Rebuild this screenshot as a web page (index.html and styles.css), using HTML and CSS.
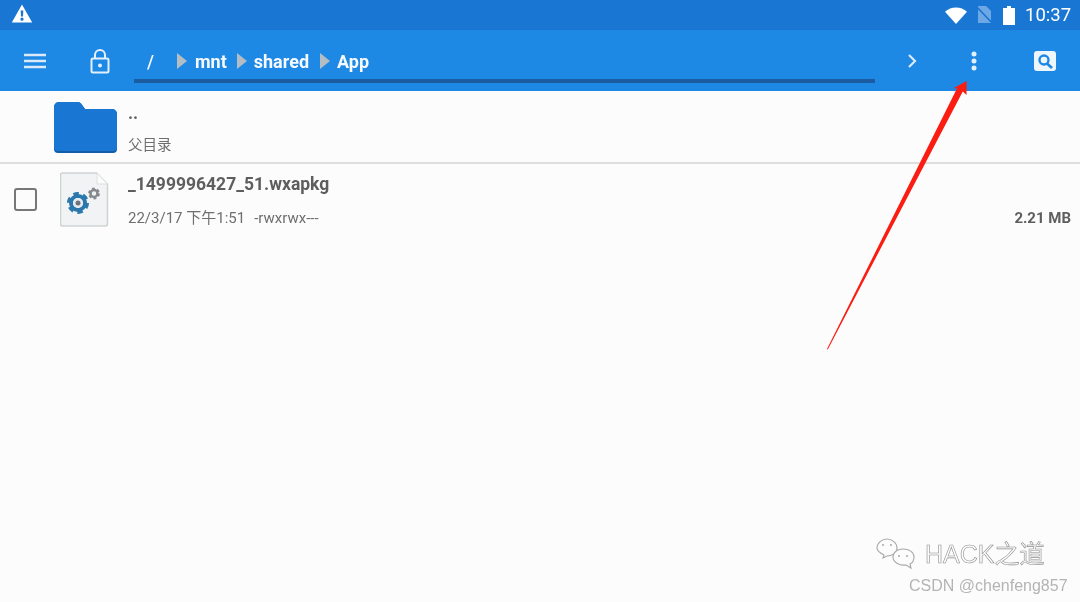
FILE: index.html
```html
<!DOCTYPE html>
<html lang="zh">
<head>
<meta charset="utf-8">
<title>File manager</title>
<link rel="stylesheet" href="styles.css">
</head>
<body>
<div class="screen">
  <header class="status-bar">
    <svg class="warn-icon" width="22" height="20" viewBox="0 0 22 20"><path fill="#fff" fill-rule="evenodd" d="M11 .5 21.2 18.500H.8ZM9.700 6.500l.3 6h2l.3-6ZM11 13.600a1.600 1.600 0 1 0 0 3.200 1.600 1.600 0 0 0 0-3.200Z"/></svg>
    <div class="status-right">
      <svg class="wifi-icon" width="22" height="17" viewBox="0 0 22 17"><path fill="#fff" d="M0 4.800C3 2 6.800.5 11 .5s8 1.500 11 4.300L11 17Z"/></svg>
      <svg class="sim-icon" width="17" height="20" viewBox="0 0 17 20"><path fill="#6ea8e4" d="M2 1h8l5 5v12H2Z"/><path stroke="#1976d2" stroke-width="1.600" d="M0 1 17 19"/></svg>
      <svg class="battery-icon" width="12" height="19" viewBox="0 0 12 19"><path fill="#fff" d="M4 0h4v2h4v17H0V2h4Z"/></svg>
      <span class="clock">10:37</span>
    </div>
  </header>

  <nav class="toolbar">
    <div class="tool tool-menu">
      <svg width="24" height="16" viewBox="0 0 24 16"><path stroke="#dbeafa" stroke-width="2.400" d="M1 2h22M1 8h22M1 14h22"/></svg>
    </div>
    <div class="tool tool-lock">
      <svg width="20" height="25" viewBox="0 0 20 25"><g fill="none" stroke="#e3f0fc" stroke-width="2"><rect x="1.500" y="9.500" width="17" height="14" rx="1.500"/><path d="M5 9.500V6a5 5 0 0 1 10 0v3.500"/></g><circle cx="10" cy="16.500" r="2" fill="#e3f0fc"/></svg>
    </div>
    <div class="path-bar">
      <span class="crumb crumb-root">/</span>
      <span class="sep sep-root"></span>
      <span class="crumb">mnt</span>
      <span class="sep"></span>
      <span class="crumb">shared</span>
      <span class="sep sep-last"></span>
      <span class="crumb">App</span>
    </div>
    <div class="tool tool-next">
      <svg width="10" height="14" viewBox="0 0 10 14"><path fill="none" stroke="#dbeafa" stroke-width="2.200" d="M2 1l6 6-6 6"/></svg>
    </div>
    <div class="tool tool-more">
      <svg width="6" height="20" viewBox="0 0 6 20"><g fill="#e3f0fc"><circle cx="3" cy="3" r="2.500"/><circle cx="3" cy="10" r="2.500"/><circle cx="3" cy="17" r="2.500"/></g></svg>
    </div>
    <div class="tool tool-search">
      <svg width="22" height="20" viewBox="0 0 22 20"><rect width="22" height="20" rx="3" fill="#eef6fd"/><circle cx="10" cy="9" r="4.500" fill="none" stroke="#1e88e5" stroke-width="2.400"/><path stroke="#1e88e5" stroke-width="2.800" d="M13 12.500l5 4.500"/></svg>
    </div>
  </nav>

  <main class="list">
    <section class="row row-parent">
      <div class="row-icon">
        <svg width="63" height="52" viewBox="0 0 63 52"><path fill="#135ea8" d="M0 6a5 5 0 0 1 5-5h19a4 4 0 0 1 3 1.500L31 8h27a5 5 0 0 1 5 5v35a4 4 0 0 1-4 4H4a4 4 0 0 1-4-4Z"/><path fill="#1976d2" d="M0 6a5 5 0 0 1 5-5h19a4 4 0 0 1 3 1.500L31 8h27a5 5 0 0 1 5 5v33a4 4 0 0 1-4 4H4a4 4 0 0 1-4-4Z"/></svg>
      </div>
      <div class="row-text">
        <div class="name">..</div>
        <div class="meta meta-parent">父目录</div>
      </div>
    </section>
    <section class="row row-file">
      <div class="check"></div>
      <div class="row-icon">
        <svg width="50" height="55" viewBox="0 0 50 55">
          <path fill="#f1f3f5" stroke="#cfd2d4" stroke-width="1.500" d="M2.500 1h34l11 11v40a2 2 0 0 1-2 2H2.500a2 2 0 0 1-2-2V3a2 2 0 0 1 2-2Z"/>
          <path fill="#fbfbfb" stroke="#dcdfe1" d="M37 1v11h10.500Z"/>
          <g fill="none">
            <circle cx="18" cy="31" r="7" stroke="#2b78ad" stroke-width="4"/>
            <circle cx="18" cy="31" r="9.500" stroke="#2b78ad" stroke-width="3" stroke-dasharray="5.500 4.450"/>
            <circle cx="34" cy="21.500" r="3.500" stroke="#85898c" stroke-width="2.500"/>
            <circle cx="34" cy="21.500" r="5" stroke="#85898c" stroke-width="1.800" stroke-dasharray="2.800 2.440"/>
          </g>
          <circle cx="18" cy="31" r="5" fill="#e6edf2"/>
          <circle cx="18" cy="31" r="2.500" fill="#6d7377"/>
        </svg>
      </div>
      <div class="row-text">
        <div class="name">_1499996427_51.wxapkg</div>
        <div class="meta"><span>22/3/17 下午1:51</span><span class="perm">-rwxrwx---</span></div>
      </div>
      <div class="size">2.21 MB</div>
    </section>
  </main>

  <svg class="arrow" width="150" height="280" viewBox="820 75 150 280"><path fill="#fb1d12" d="M966.700 81 966.500 95 962.800 91.500 827.800 349.500 827 349 957.200 88 953 88.500Z"/></svg>

  <div class="watermark">
    <div class="wm-top">
      <svg width="42" height="32" viewBox="0 0 42 32"><g fill="#fcfcfc" stroke="#a8a8a8" stroke-width="1.100"><path d="M11 1c5 0 10 4 10 9 0 5-5 8-10 8l-4 2 1-3C4 15 1 13 1 10c0-5 5-9 10-9Z"/><path d="M27 11c6 0 11 3 11 8 0 3-2 6-4 7l1 4-5-3c-7 1-13-3-13-8 0-5 5-8 10-8Z"/></g><g fill="#a8a8a8"><circle cx="7" cy="7" r="1"/><circle cx="15" cy="7" r="1"/><circle cx="23" cy="18" r="1"/><circle cx="31" cy="18" r="1"/></g></svg>
      <span class="wm-title">HACK之道</span>
    </div>
    <div class="wm-sub">CSDN @chenfeng857</div>
  </div>
</div>
</body>
</html>
```
FILE: styles.css
```css
* { box-sizing: border-box; }
html, body { margin: 0; padding: 0; }
body {
  background: #fcfcfc;
  font-family: Roboto, "Noto Sans CJK SC", sans-serif;
  overflow: hidden;
}
.screen { position: relative; width: 1080px; height: 602px; overflow: hidden; background: #fcfcfc; filter: blur(.4px); }

.status-bar {
  height: 30px;
  background: #1976d2;
  display: flex;
  align-items: center;
  justify-content: space-between;
  padding: 0 9px 0 11px;
}
.warn-icon { margin-top: -2px; }
.status-right { display: flex; align-items: center; }
.wifi-icon { margin-right: 9px; }
.sim-icon { margin-right: 10px; }
.battery-icon { margin-right: 10px; }
.clock { color: #fff; font-size: 18.500px; width: 46px; text-align: right; white-space: nowrap; }

.toolbar {
  height: 61px;
  background: #1e88e5;
  display: flex;
  align-items: center;
}
.tool { display: flex; align-items: center; justify-content: center; height: 100%; }
.tool-menu { width: 70px; }
.tool-lock { width: 60px; margin-top: 1px; }
.tool-next { width: 74px; }
.tool-more { width: 50px; }
.tool-search { width: 70px; margin-left: 11px; }

.path-bar {
  width: 741px;
  margin-left: 4px;
  height: 100%;
  display: flex;
  align-items: center;
  padding: 1px 0 0 13px;
  position: relative;
}
.path-bar::after {
  content: "";
  position: absolute;
  left: 0; right: 0;
  top: 49px;
  height: 4px;
  background: #1a5c9f;
}
.crumb { color: #f6fafe; font-size: 18px; font-weight: 700; }
.crumb-root { font-weight: 500; width: 30px; }
.sep {
  width: 0; height: 0;
  margin: 0 7px 0 10px;
  border-left: 10px solid #b4bcc4;
  border-top: 8px solid transparent;
  border-bottom: 8px solid transparent;
}
.sep-root { margin-left: 0; margin-right: 8px; }
.sep-last { margin-left: 11px; }

.row { display: flex; background: #fcfcfc; position: relative; }
.row-parent { height: 73px; padding-left: 54px; border-bottom: 2px solid #dedede; align-items: flex-start; }
.row-parent .row-icon { width: 74px; padding-top: 10px; }
.row-file { height: 74px; padding-left: 14px; }
.check {
  width: 23px; height: 23px;
  border: 2.500px solid #777;
  border-radius: 3px;
  margin-top: 24px;
}
.row-file .row-icon { width: 68px; padding: 8px 0 0 23px; }
.row-file .row-text { margin-left: 23px; }
.row-text { display: flex; flex-direction: column; }
.name { color: #5e5e5e; font-size: 17.500px; font-weight: 700; height: 20px; line-height: 20px; margin-top: 12px; white-space: nowrap; }
.row-file .name { margin-top: 10px; }
.meta { color: #6e6e6e; font-size: 15px; line-height: 20px; margin-top: 14px; white-space: nowrap; }
.meta-parent { margin-top: 13px; font-size: 14.500px; }
.perm { margin-left: 9px; }
.size { margin-left: auto; margin-right: 9px; margin-top: 44px; color: #5e5e5e; font-size: 15px; font-weight: 700; line-height: 20px; }

.arrow { position: absolute; left: 820px; top: 75px; }

.watermark { position: absolute; left: 876px; top: 538px; width: 204px; }
.wm-top { display: flex; align-items: center; }
.wm-title { color: #fdfdfd; font-size: 25px; margin: -5px 0 0 7px; -webkit-text-stroke: .6px #8e8e8e; font-family: "Liberation Sans", "Noto Sans CJK SC", sans-serif; }
.wm-sub { color: #b4b4b4; font-size: 16px; margin: 7px 0 0 33px; line-height: 17px; font-family: "Liberation Sans", sans-serif; white-space: nowrap; }
```
